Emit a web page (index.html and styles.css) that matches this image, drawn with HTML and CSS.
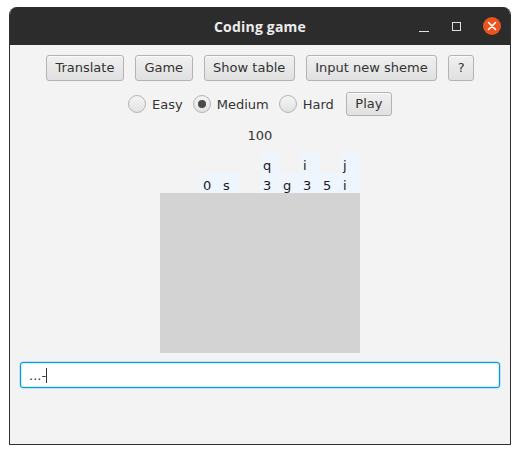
FILE: index.html
```html
<!DOCTYPE html>
<html>
<head>
<meta charset="utf-8">
<link rel="stylesheet" href="styles.css">
</head>
<body>
<div class="window">
  <div class="titlebar">
    <span class="title">Coding game</span>
    <div class="controls">
      <span class="min"></span>
      <span class="max"></span>
      <span class="close">
        <svg width="10" height="10" viewBox="0 0 10 10"><path d="M1.5 1.5 L8.5 8.5 M8.5 1.5 L1.5 8.5" stroke="#fff" stroke-width="1.6" stroke-linecap="round"/></svg>
      </span>
    </div>
  </div>
  <div class="content">
    <div class="toolbar">
      <button class="btn">Translate</button>
      <button class="btn">Game</button>
      <button class="btn">Show table</button>
      <button class="btn">Input new sheme</button>
      <button class="btn">?</button>
    </div>
    <div class="levels">
      <label class="radio"><span class="dot"></span>Easy</label>
      <label class="radio selected"><span class="dot"></span>Medium</label>
      <label class="radio"><span class="dot"></span>Hard</label>
      <button class="btn play">Play</button>
    </div>
    <div class="score">100</div>
    <div class="board">
      <div class="cells">
        <span></span><span></span><span></span><span></span><span></span>
        <span class="hl">q</span><span></span><span class="hl">i</span><span></span><span class="hl">j</span>
        <span></span><span></span><span class="hl">0</span><span class="hl">s</span><span></span>
        <span class="hl">3</span><span class="hl">g</span><span class="hl">3</span><span class="hl">5</span><span class="hl">i</span>
      </div>
      <div class="pane"></div>
    </div>
    <div class="field"><span class="val">...-</span><span class="caret"></span></div>
  </div>
</div>
</body>
</html>
```
FILE: styles.css
```css
html, body {
  margin: 0;
  padding: 0;
  background: #ffffff;
}
body {
  padding: 7px 9px 0 9px;
  font-family: "DejaVu Sans", sans-serif;
}
.window {
  width: 502px;
  height: 438px;
  box-sizing: border-box;
  border: 1px solid #2f2f2f;
  border-top: none;
  border-radius: 8px 8px 0 0;
  display: flex;
  flex-direction: column;
  background: #f3f3f3;
  overflow: hidden;
}
.titlebar {
  height: 38px;
  background: #2c2c2c;
  display: flex;
  align-items: center;
  justify-content: center;
  position: relative;
  flex: none;
  margin: 0 -1px;
}
.title {
  color: #ececec;
  font-family: "Open Sans", sans-serif;
  font-weight: 700;
  font-size: 14px;
  letter-spacing: 0.2px;
}
.controls {
  position: absolute;
  right: 10px;
  top: 0;
  height: 38px;
  display: flex;
  align-items: center;
}
.min {
  width: 10px;
  height: 1.5px;
  background: #e0e0e0;
  margin-top: 11px;
  margin-right: 23px;
}
.max {
  width: 7px;
  height: 7px;
  border: 1.2px solid #e0e0e0;
  margin-right: 22px;
}
.close {
  width: 18px;
  height: 18px;
  border-radius: 50%;
  background: #e95420;
  display: flex;
  align-items: center;
  justify-content: center;
}
.content {
  flex: 1;
  display: flex;
  flex-direction: column;
  align-items: center;
  padding-top: 10px;
}
.toolbar {
  display: flex;
  gap: 11px;
}
.btn {
  font-family: "DejaVu Sans", sans-serif;
  font-size: 13px;
  color: #333333;
  height: 26px;
  padding: 0 8.5px;
  border: 1px solid #b3b3b3;
  border-radius: 3px;
  background: linear-gradient(#f0f0f0, #e0e0e0);
  box-shadow: inset 0 1px 0 #fafafa;
  line-height: 24px;
}
.levels {
  display: flex;
  align-items: center;
  margin-top: 11px;
  height: 24px;
}
.radio {
  display: flex;
  align-items: center;
  font-size: 13px;
  color: #333333;
  margin-right: 10px;
}
.dot {
  width: 16px;
  height: 16px;
  border-radius: 50%;
  border: 1px solid #b5b5b5;
  background: linear-gradient(#f4f4f4, #e2e2e2);
  margin-right: 6px;
  display: flex;
  align-items: center;
  justify-content: center;
}
.selected .dot::after {
  content: "";
  width: 8px;
  height: 8px;
  border-radius: 50%;
  background: #4a4a4a;
}
.btn.play {
  height: 24px;
  line-height: 22px;
  margin-left: 2px;
}
.score {
  font-size: 13px;
  color: #333333;
  margin-top: 12px;
  line-height: 16px;
}
.board {
  margin-top: 9px;
  display: flex;
  flex-direction: column;
}
.cells {
  display: grid;
  grid-template-columns: repeat(10, 20px);
  grid-template-rows: 20px 20px;
}
.cells span {
  font-size: 13px;
  color: #1a1a1a;
  line-height: 20px;
  padding-left: 3px;
  padding-top: 3px;
  box-sizing: border-box;
}
.cells .hl {
  background: #eef5fd;
}
.pane {
  width: 200px;
  height: 160px;
  background: #d3d3d3;
}
.field {
  align-self: stretch;
  margin: 9px 10px 0 10px;
  height: 26px;
  box-sizing: border-box;
  border: 1px solid #049ed6;
  border-radius: 3px;
  background: #ffffff;
  box-shadow: inset 0 0 0 1px #d5eef9, 0 0 0 0.5px #8fd3ef;
  display: flex;
  align-items: center;
  padding-left: 8px;
  font-size: 13px;
  color: #333333;
}
.caret {
  width: 1px;
  height: 15px;
  background: #333333;
}
```
